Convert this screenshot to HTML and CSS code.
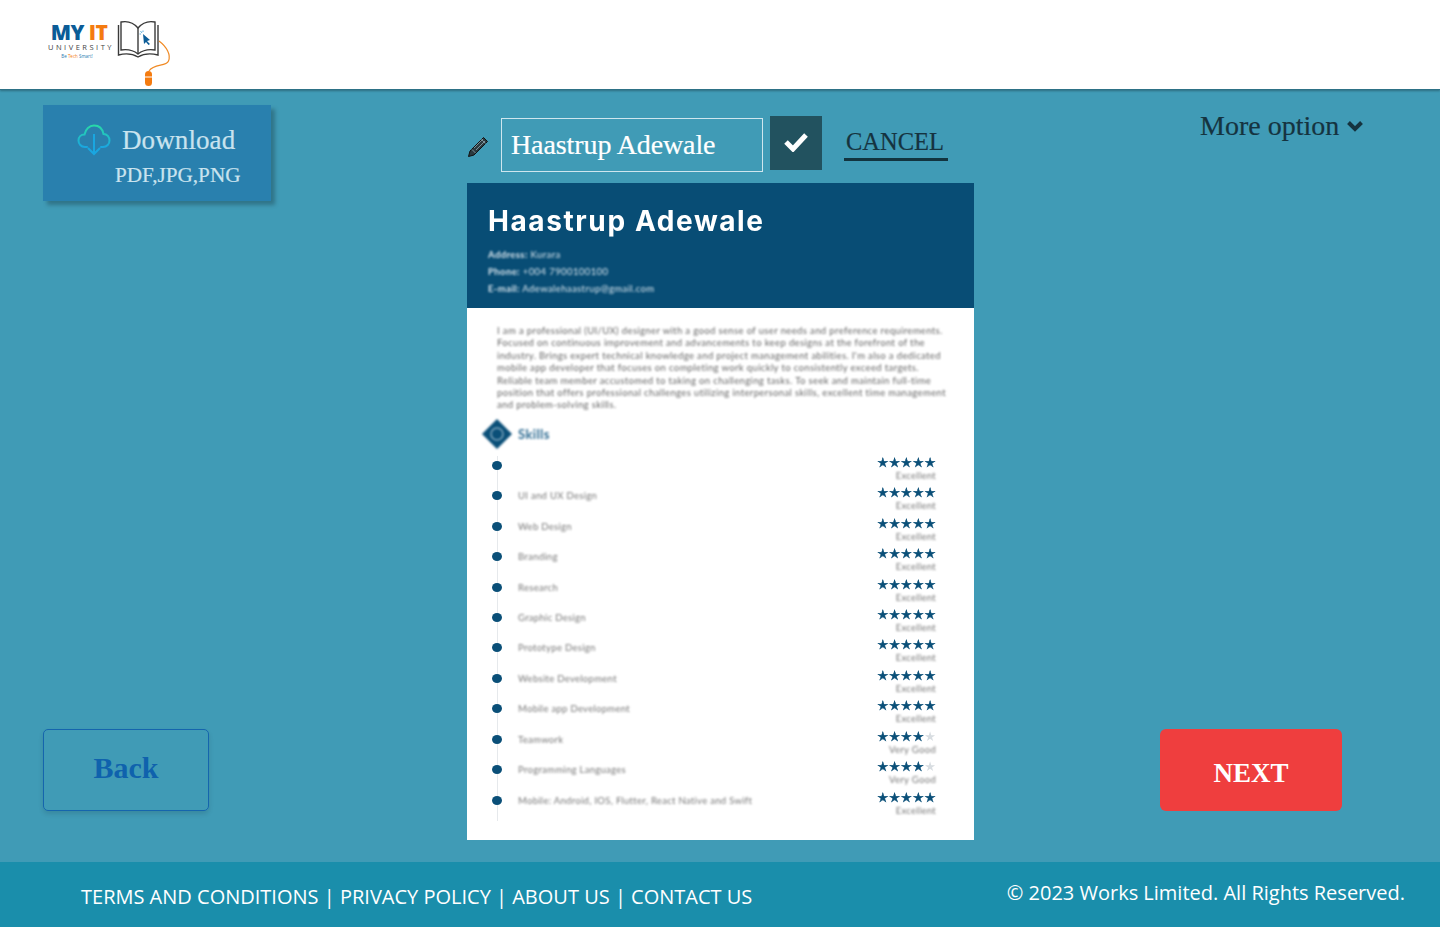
FILE: index.html
```html
<!DOCTYPE html>
<html lang="en">
	<head>
		<meta charset="UTF-8" />
		<meta name="viewport" content="width=device-width, initial-scale=1.0" />
		<title>Resume Preview</title>
		<link rel="stylesheet" href="styles.css">
	</head>
	<body>
		<header class="topbar">
			<div class="logo">
				<div class="logo-text">
					<div class="logo-name"><span class="logo-my">MY</span> <span class="logo-it">IT</span></div>
					<div class="logo-uni">UNIVERSITY</div>
					<div class="logo-tag">Be <span class="logo-it">Tech</span> Smart!</div>
				</div>
				<svg class="logo-mark" width="58" height="70" viewBox="0 0 58 70">
					<g fill="none" stroke="#3a3a3a" stroke-width="1.4">
						<path d="M21 11C16 5 9 4 4 5V33C10 32 16 33 21 37C26 33 32 32 38 33V5C33 4 26 5 21 11Z" fill="#fff" />
						<path d="M21 11V37" />
						<path d="M1.500 8V38C9 36 16 37 21 40C26 37 33 36 41 38V8" />
					</g>
					<path d="M26 17L33 23L30 24L33 27L31.500 28L29 25L27 27Z" fill="#0b5c97" />
					<path d="M23.500 14L25 16M26 13.500V15M22.500 17H24" stroke="#3a9ad0" stroke-width=".8" />
					<path d="M42 24C50 30 54 38 51.500 44C49 50 37 46 32 54" fill="none" stroke="#f08a24" stroke-width="1.200" />
					<rect x="28" y="54" width="7" height="15" rx="3.500" fill="#f47b10" />
					<path d="M28 60H35" stroke="#fff" stroke-width="1" />
				</svg>
			</div>
		</header>

		<main class="content">
			<section class="side side-left">
				<a class="download-card">
					<div class="download-top">
						<svg width="34" height="34" viewBox="0 0 34 34">
							<defs>
								<linearGradient id="cloud" x1="0" y1="0" x2="0" y2="1">
									<stop offset="0" stop-color="#28d9a8" />
									<stop offset="1" stop-color="#1aa6e0" />
								</linearGradient>
							</defs>
							<path d="M10 24H8C4 24 1.500 21 1.500 17.500C1.500 14 4 11.500 7.500 11.500C8.500 6 12.500 2.500 17 2.500C22 2.500 25.500 6 26.500 11C30 11 32.500 14 32.500 17.500C32.500 21 30 24 26 24H24" fill="none" stroke="url(#cloud)" stroke-width="2" stroke-linecap="round" />
							<path d="M17 11V30M11 25L17 31L23 25" fill="none" stroke="#1aa6e0" stroke-width="2" />
						</svg>
						<span>Download</span>
					</div>
					<div class="download-types">PDF,JPG,PNG</div>
				</a>
				<a class="btn btn-back">Back</a>
			</section>

			<section class="center">
				<div class="name-bar">
					<svg class="pencil" width="22" height="22" viewBox="0 0 22 22">
						<path d="M16.500 1.500L20.500 5.500L7 19L1.500 20.500L3 15Z" fill="#2b3a40" stroke="#111" stroke-width="1" />
						<path d="M5 13.500L8.500 17M14.500 3.500L18.500 7.500M7 12L16 3M9 14L18 5" fill="none" stroke="#9fb9c2" stroke-width=".7" />
					</svg>
					<input class="name-input" type="text" value="Haastrup Adewale" />
					<button class="btn-check" type="button">
						<svg width="26" height="20" viewBox="0 0 26 20">
							<path d="M3 10L10 17L23 3" fill="none" stroke="#fff" stroke-width="5" />
						</svg>
					</button>
					<a class="cancel">CANCEL</a>
				</div>

				<article class="resume">
					<div class="resume-head">
						<h1>Haastrup Adewale</h1>
						<p><b>Address:</b> Kurara</p>
						<p><b>Phone:</b> +004 7900100100</p>
						<p><b>E-mail:</b> Adewalehaastrup@gmail.com</p>
					</div>
					<div class="resume-body">
						<p class="summary">I am a professional (UI/UX) designer with a good sense of user needs and preference requirements.<br>Focused on continuous improvement and advancements to keep designs at the forefront of the<br>industry. Brings expert technical knowledge and project management abilities. I'm also a dedicated<br>mobile app developer that focuses on completing work quickly to consistently exceed targets.<br>Reliable team member accustomed to taking on challenging tasks. To seek and maintain full-time<br>position that offers professional challenges utilizing interpersonal skills, excellent time management<br>and problem-solving skills.</p>
						<div class="skills-title">
							<svg width="32" height="32" viewBox="0 0 32 32">
								<path d="M16 1L31 16L16 31L1 16Z" fill="#0a4f78" />
								<circle cx="16" cy="16" r="6" fill="none" stroke="#7fa6bd" stroke-width="1.500" />
							</svg>
							<span>Skills</span>
						</div>
						<ul class="skills">
							<li><i class="dot"></i><span class="skill-name"></span><div class="rating"><span class="stars">★★★★★</span><small>Excellent</small></div></li>
							<li><i class="dot"></i><span class="skill-name">UI and UX Design</span><div class="rating"><span class="stars">★★★★★</span><small>Excellent</small></div></li>
							<li><i class="dot"></i><span class="skill-name">Web Design</span><div class="rating"><span class="stars">★★★★★</span><small>Excellent</small></div></li>
							<li><i class="dot"></i><span class="skill-name">Branding</span><div class="rating"><span class="stars">★★★★★</span><small>Excellent</small></div></li>
							<li><i class="dot"></i><span class="skill-name">Research</span><div class="rating"><span class="stars">★★★★★</span><small>Excellent</small></div></li>
							<li><i class="dot"></i><span class="skill-name">Graphic Design</span><div class="rating"><span class="stars">★★★★★</span><small>Excellent</small></div></li>
							<li><i class="dot"></i><span class="skill-name">Prototype Design</span><div class="rating"><span class="stars">★★★★★</span><small>Excellent</small></div></li>
							<li><i class="dot"></i><span class="skill-name">Website Development</span><div class="rating"><span class="stars">★★★★★</span><small>Excellent</small></div></li>
							<li><i class="dot"></i><span class="skill-name">Mobile app Development</span><div class="rating"><span class="stars">★★★★★</span><small>Excellent</small></div></li>
							<li><i class="dot"></i><span class="skill-name">Teamwork</span><div class="rating"><span class="stars">★★★★<em>★</em></span><small>Very Good</small></div></li>
							<li><i class="dot"></i><span class="skill-name">Programming Languages</span><div class="rating"><span class="stars">★★★★<em>★</em></span><small>Very Good</small></div></li>
							<li><i class="dot"></i><span class="skill-name">Mobile: Android, IOS, Flutter, React Native and Swift</span><div class="rating"><span class="stars">★★★★★</span><small>Excellent</small></div></li>
						</ul>
					</div>
				</article>
			</section>

			<section class="side side-right">
				<a class="more">More option
					<svg width="16" height="12" viewBox="0 0 16 12">
						<path d="M1.500 2.500L8 9L14.500 2.500" fill="none" stroke="#15333f" stroke-width="4" />
					</svg>
				</a>
				<a class="btn btn-next">NEXT</a>
			</section>
		</main>

		<footer class="footer">
			<nav class="footer-links">
				<a>TERMS AND CONDITIONS</a> | <a>PRIVACY POLICY</a> | <a>ABOUT US</a> | <a>CONTACT US</a>
			</nav>
			<p class="copyright">© 2023 Works Limited. All Rights Reserved.</p>
		</footer>
	</body>
</html>
```

FILE: styles.css
```css
* {
	box-sizing: border-box;
}
body {
	margin: 0;
	height: 927px;
	overflow: hidden;
	display: flex;
	flex-direction: column;
	background-color: #409bb6;
	font-family: "Liberation Serif", serif;
}

.topbar {
	height: 90px;
	flex: none;
	padding: 17px 0 0 48px;
	background-color: #fff;
	border-bottom: 1px solid #2d7186;
	box-shadow: 0 1px 2px rgba(0, 0, 0, 0.3);
}
.logo {
	display: flex;
	align-items: flex-start;
	gap: 3px;
}
.logo-text {
	width: 66px;
	padding-top: 5px;
	text-align: center;
	font-family: "Open Sans", sans-serif;
}
.logo-name {
	padding-right: 4px;
	font-size: 21px;
	line-height: 21px;
	font-weight: 800;
	letter-spacing: -0.6px;
}
.logo-my {
	color: #0b5c97;
}
.logo-it {
	color: #f47b10;
}
.logo-uni {
	font-size: 7.500px;
	line-height: 9px;
	letter-spacing: 2.500px;
	color: #444;
	white-space: nowrap;
}
.logo-tag {
	padding: 1px 8px 0 0;
	font-size: 4.500px;
	line-height: 7px;
	color: #2a7ab0;
}

.content {
	flex: 1;
	display: grid;
	grid-template-columns: 467px 507px 1fr;
}
.side {
	display: flex;
	flex-direction: column;
	justify-content: space-between;
	align-items: flex-start;
	padding-bottom: 51px;
}
.side-left {
	padding-top: 15px;
	padding-left: 43px;
}
.side-right {
	padding-top: 18px;
	padding-left: 186px;
}

.download-card {
	width: 228px;
	height: 96px;
	padding: 18px 0 0 34px;
	background-color: #2980ae;
	color: #c9e3ee;
	box-shadow: 4px 4px 4px rgba(0, 0, 0, 0.25);
}
.download-top {
	display: flex;
	align-items: center;
	gap: 11px;
	font-size: 27px;
	letter-spacing: 0.1px;
	-webkit-text-stroke: 0.2px #c9e3ee;
}
.download-types {
	margin: 4px 0 0 38px;
	font-size: 21.200px;
	line-height: 28px;
	-webkit-text-stroke: 0.2px #c9e3ee;
}

.btn {
	display: flex;
	align-items: center;
	justify-content: center;
	height: 82px;
	font-weight: bold;
}
.btn-back {
	width: 166px;
	font-size: 30px;
	color: #0f62ad;
	border: 1px solid #1565ad;
	border-radius: 5px;
	padding-bottom: 5px;
	box-shadow: 0 3px 5px rgba(0, 0, 0, 0.12);
}
.btn-next {
	width: 182px;
	padding-top: 7px;
	font-size: 27px;
	color: #fff;
	background-color: #ef3e3e;
	border-radius: 6px;
}

.center {
	padding-top: 26px;
}
.name-bar {
	display: flex;
	align-items: flex-start;
	height: 67px;
	white-space: nowrap;
}
.pencil {
	margin: 20px 12px 0 0;
	flex: none;
}
.name-input {
	width: 262px;
	height: 54px;
	margin-top: 2px;
	padding: 0 9px;
	background: transparent;
	border: 1px solid #cfe6ee;
	color: #fff;
	font-family: "Liberation Serif", serif;
	font-size: 28px;
	letter-spacing: -0.1px;
	-webkit-text-stroke: 0.2px #fff;
}
.btn-check {
	flex: none;
	width: 52px;
	height: 54px;
	margin-left: 7px;
	padding: 0;
	border: 0;
	background-color: #22525f;
}
.cancel {
	margin: 10px 0 0 22px;
	padding: 0 4px 0 2px;
	font-size: 24.500px;
	line-height: 32px;
	color: #15333f;
	border-bottom: 3px solid #12343f;
	-webkit-text-stroke: 0.2px #15333f;
}
.more {
	display: flex;
	align-items: center;
	gap: 8px;
	margin-left: 40px;
	white-space: nowrap;
	font-size: 28px;
	line-height: 36px;
	color: #15333f;
	-webkit-text-stroke: 0.2px #15333f;
}

.resume {
	height: 657px;
	background-color: #fff;
	font-family: Lato, sans-serif;
}
.resume-head {
	height: 125px;
	padding: 21px 0 0 21px;
	background-color: #084d75;
	color: #d8e4ec;
}
.resume-head h1 {
	margin: 0 0 8px;
	font-family: Inter, sans-serif;
	font-size: 28px;
	line-height: 34px;
	font-weight: 700;
	letter-spacing: 1.600px;
	color: #fff;
	filter: blur(0.7px);
}
.resume-head p {
	margin: 0;
	font-size: 9.500px;
	line-height: 17px;
	letter-spacing: 0.4px;
	filter: blur(1px);
	white-space: nowrap;
}
.resume-body {
	padding-top: 17px;
}
.summary {
	margin: 0 0 6px 30px;
	font-size: 9.500px;
	line-height: 12.400px;
	letter-spacing: 0.37px;
	color: #666;
	white-space: nowrap;
	filter: blur(1px);
}
.skills-title {
	display: flex;
	align-items: center;
	gap: 5px;
	margin: 0 0 6px 14px;
	height: 32px;
	font-size: 13px;
	font-weight: bold;
	letter-spacing: 0.4px;
	color: #2d6b92;
	filter: blur(0.8px);
}
.skills {
	list-style: none;
	margin: 0 38px 0 30px;
	padding: 0;
	border-left: 1px solid #e6e9ec;
}
.skills li {
	display: flex;
	align-items: flex-start;
	height: 30.450px;
	padding-top: 5px;
}
.dot {
	width: 10px;
	height: 9px;
	margin: 0 16px 0 -6px;
	background-color: #0a4f78;
	border-radius: 50%;
	filter: blur(0.4px);
	flex: none;
}
.skill-name {
	flex: 1;
	margin-top: -1px;
	font-size: 9.500px;
	line-height: 12px;
	letter-spacing: 0.3px;
	color: #777;
	filter: blur(1px);
}
.rating {
	margin-top: -4px;
	text-align: right;
}
.stars {
	display: block;
	font-family: "DejaVu Sans", sans-serif;
	font-size: 13px;
	line-height: 11px;
	letter-spacing: 0.2px;
	margin-right: -0.200px;
	color: #0a4f78;
	-webkit-text-stroke: 0.4px #0a4f78;
	filter: blur(0.4px);
}
.stars em {
	font-style: normal;
	color: #d8dde1;
	-webkit-text-stroke: 0;
}
.rating small {
	display: block;
	margin-top: 2px;
	font-size: 9.500px;
	line-height: 11px;
	letter-spacing: 0.3px;
	color: #777;
	filter: blur(1px);
}

.footer {
	height: 65px;
	flex: none;
	display: flex;
	justify-content: space-between;
	padding: 0 35px 0 81px;
	background-color: #1a8eab;
	color: #fff;
	font-family: "Open Sans", sans-serif;
	font-size: 20px;
}
.footer-links {
	padding-top: 21px;
	line-height: 28px;
}
.copyright {
	margin: 17px 0 0;
	line-height: 28px;
}
```
